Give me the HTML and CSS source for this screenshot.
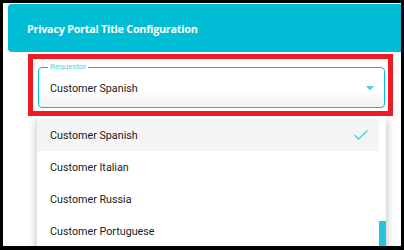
FILE: index.html
```html
<!DOCTYPE html>
<html>
<head lang="en">
    <meta charset="UTF-8">
    <title>Privacy Portal Title Configuration</title>
    <link rel="stylesheet" href="styles.css">
</head>
<body>
<div class="frame">
    <div class="card_head">Privacy Portal Title Configuration</div>

    <div class="highlight">
        <fieldset class="field">
            <legend>Requestor</legend>
            <div class="select_row">
                <span>Customer Spanish</span>
                <svg class="caret" width="8" height="5" viewBox="0 0 8 5"><path d="M0 0h8L4 4.5z" fill="#4dd0e1"/></svg>
            </div>
        </fieldset>
    </div>

    <div class="menu">
        <ul class="menu_list">
            <li class="active">
                <span>Customer Spanish</span>
                <svg width="14" height="10" viewBox="0 0 14 10"><polyline points="0.5,5 4.5,9 13.5,0.5" fill="none" stroke="#4dd0e1" stroke-width="1.4"/></svg>
            </li>
            <li><span>Customer Italian</span></li>
            <li><span>Customer Russia</span></li>
            <li><span>Customer Portuguese</span></li>
        </ul>
        <div class="track"><span class="thumb"></span></div>
    </div>
</div>
</body>
</html>
```

FILE: styles.css
```css
body,div,ul,li,fieldset,legend{ margin:0; padding:0;}
ul{ list-style:none;}

body{
    background-color: #000;
    font-family: Roboto, "Liberation Sans", sans-serif;
    color: #212121;
}
.frame{
    margin: 3px 3px 0 3px;
    height: 243px;
    background-color: #fff;
    overflow: hidden;
}
.card_head{
    margin: 1px -10px 0 5px;
    height: 48px;
    padding-left: 19px;
    display: flex;
    align-items: center;

    background-color: #00bcd4;
    border-radius: 4px;
    color: #fff;
    font-family: "Open Sans", sans-serif;
    font-weight: 700;
    font-size: 10.8px;
    letter-spacing: -0.25px;
}
.highlight{
    position: relative;
    z-index: 1;
    box-sizing: border-box;
    width: 365px;
    margin: 2px 0 0 25px;
    padding: 4px 3px 3px 5px;
    border: 5px solid #ed1c24;
}
.field{
    min-width: 0;
    padding: 0 10px 0 11px;
    border: 1px solid #00bcd4;
    border-radius: 4px;
    background: linear-gradient(#fff 55%, #f2f2f2);
}
.field legend{
    margin-left: -2px;
    padding: 0 2px;
    font-size: 8px;
    line-height: 8px;
    color: #4dd0e1;
}
.select_row{
    height: 34px;
    padding-bottom: 2px;
    display: flex;
    align-items: center;
    justify-content: space-between;
    font-size: 10.75px;
}
.caret{
    display: block;
}
.menu{
    width: 349px;
    margin-left: 34px;
    height: 140px;
    display: flex;
    background-color: #fff;
    box-shadow: 0 3px 9px rgba(0,0,0,.28);
}
.menu_list{
    flex: 1;
    padding-top: 3px;
}
.menu_list li{
    height: 32px;
    padding: 0 11px 0 13px;
    display: flex;
    align-items: center;
    justify-content: space-between;
    font-size: 10.75px;
}
.menu_list li.active{
    background-color: #f4f4f4;
}
.menu_list svg{
    display: block;
}
.track{
    width: 7px;
}
.thumb{
    display: block;
    margin-top: 105px;
    height: 40px;
    background-color: #26c6da;
}
```
